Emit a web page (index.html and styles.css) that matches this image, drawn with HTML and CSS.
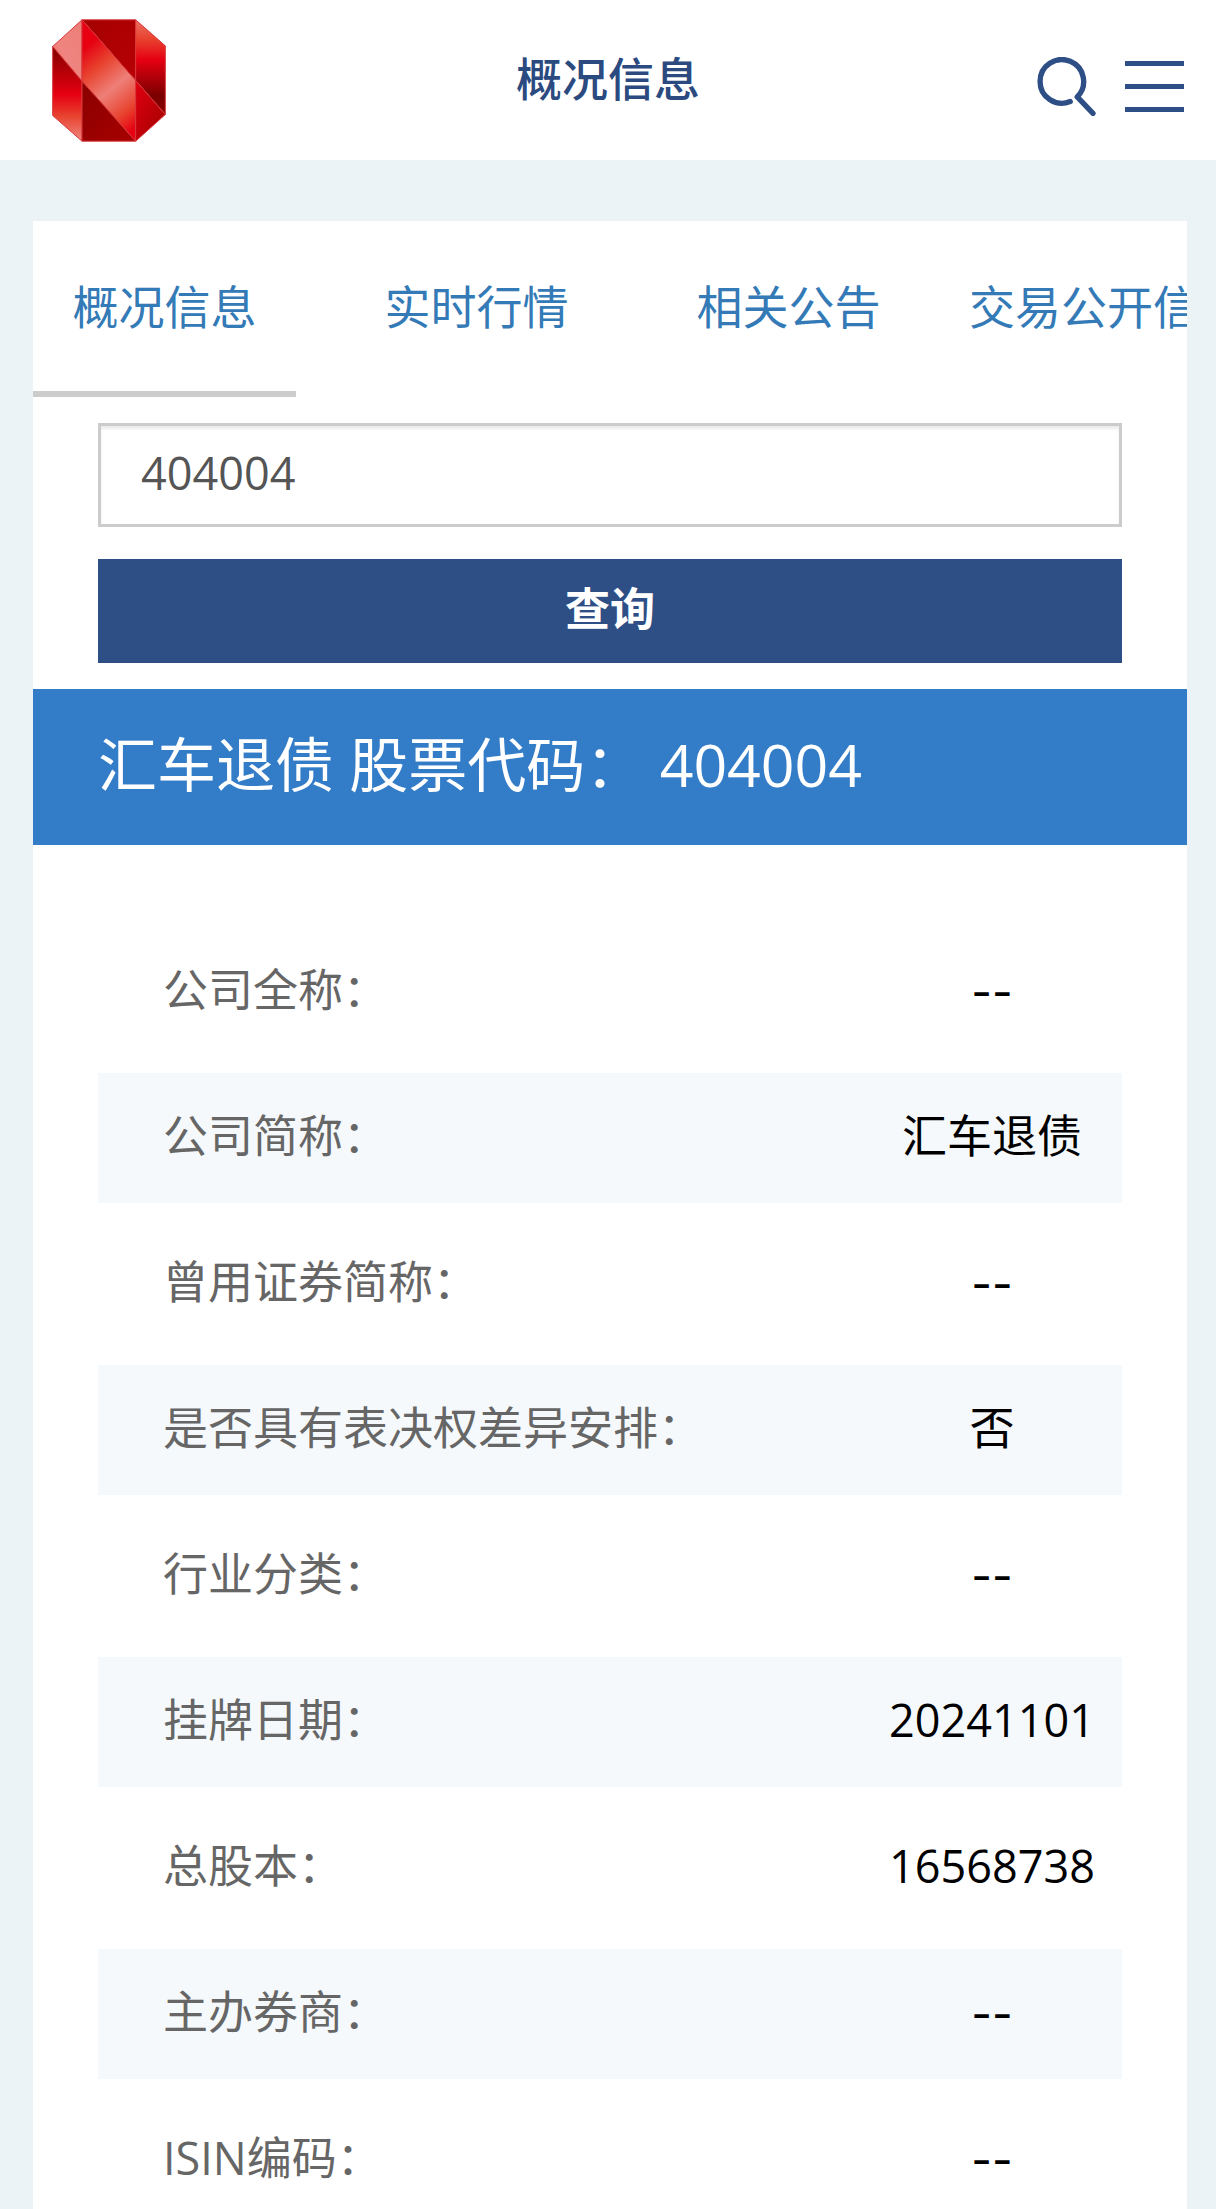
FILE: index.html
```html
<!DOCTYPE html>
<html lang="zh-CN">
<head>
  <meta charset="UTF-8" />
  <meta name="viewport" content="width=device-width, initial-scale=1.0"/>
  <title>概况信息</title>
  <link rel="stylesheet" href="styles.css">
</head>
<body>
  <header class="header">
    <a class="logo" href="#" aria-label="首页">
      <svg width="114" height="123" viewBox="66 54 342 368">
        <defs>
          <linearGradient id="leftTop" x1="0" y1="1" x2="1" y2="0">
            <stop offset="0" stop-color="#e8605a"/>
            <stop offset="0.4" stop-color="#ef8480"/>
            <stop offset="1" stop-color="#ee7f78"/>
          </linearGradient>
          <linearGradient id="leftSide" gradientUnits="userSpaceOnUse" x1="0" y1="150" x2="0" y2="410">
            <stop offset="0" stop-color="#8a0000"/>
            <stop offset="0.25" stop-color="#b80008"/>
            <stop offset="0.5" stop-color="#e60012"/>
            <stop offset="0.75" stop-color="#e8432f"/>
            <stop offset="1" stop-color="#ee7f78"/>
          </linearGradient>
          <linearGradient id="band" gradientUnits="userSpaceOnUse" x1="150" y1="150" x2="330" y2="370">
            <stop offset="0" stop-color="#e60012"/>
            <stop offset="0.25" stop-color="#e8432f"/>
            <stop offset="0.52" stop-color="#ee7f78"/>
            <stop offset="0.8" stop-color="#e8432f"/>
            <stop offset="1" stop-color="#e60012"/>
          </linearGradient>
          <linearGradient id="topDark" x1="0" y1="0" x2="1" y2="1">
            <stop offset="0" stop-color="#a40000"/>
            <stop offset="1" stop-color="#b80006"/>
          </linearGradient>
          <linearGradient id="bottomDark" x1="0" y1="0" x2="1" y2="1">
            <stop offset="0" stop-color="#8a0000"/>
            <stop offset="1" stop-color="#a80000"/>
          </linearGradient>
          <linearGradient id="rightSide" x1="0" y1="0" x2="0" y2="1">
            <stop offset="0" stop-color="#ee7064"/>
            <stop offset="0.2" stop-color="#e8432f"/>
            <stop offset="0.42" stop-color="#e60012"/>
            <stop offset="0.8" stop-color="#7a0000"/>
            <stop offset="1" stop-color="#8a0000"/>
          </linearGradient>
          <linearGradient id="rightBottom" x1="0" y1="0" x2="1" y2="1">
            <stop offset="0" stop-color="#e00010"/>
            <stop offset="1" stop-color="#a00000"/>
          </linearGradient>
        </defs>
        <g stroke="#d8383c" stroke-width="3" stroke-linejoin="round">
          <path fill="url(#leftTop)" d="M156 56L68 136L156 240Z"/>
          <path fill="url(#leftSide)" d="M68 136L156 240V420L68 343Z"/>
          <path fill="url(#topDark)" d="M156 56H317V238Z"/>
          <path fill="url(#band)" d="M156 56L317 238V420L156 240Z"/>
          <path fill="url(#bottomDark)" d="M156 240L317 420H156Z"/>
          <path fill="url(#rightSide)" d="M317 56L406 134V340L317 238Z"/>
          <path fill="url(#rightBottom)" d="M317 238L406 340L317 420Z"/>
        </g>
      </svg>
    </a>
    <h1 class="title">概况信息</h1>
    <div class="actions">
      <button type="button" class="icon-btn" aria-label="搜索">
        <svg width="59" height="59" viewBox="82 78 176 176" fill="none" stroke="#2e4e86" stroke-width="16" stroke-linecap="round" stroke-linejoin="round">
          <path d="M181 211A65 65 0 1 1 202 197L249 246"/>
        </svg>
      </button>
      <button type="button" class="icon-btn" aria-label="菜单">
        <svg width="59" height="51" viewBox="0 0 59 51" fill="#2e4e86">
          <rect width="59" height="5"/>
          <rect y="23" width="59" height="5"/>
          <rect y="46" width="59" height="5"/>
        </svg>
      </button>
    </div>
  </header>

  <main class="panel">
    <nav class="tabs">
      <a class="tab active" href="#">概况信息</a>
      <a class="tab" href="#">实时行情</a>
      <a class="tab" href="#">相关公告</a>
      <a class="tab" href="#">交易公开信息</a>
    </nav>

    <form class="search">
      <input type="text" class="search-input" value="404004" aria-label="股票代码">
      <button type="button" class="search-btn">查询</button>
    </form>

    <h2 class="banner">汇车退债 股票代码： 404004</h2>

    <!-- Company info -->
    <dl class="info">
      <div class="row"><dt>公司全称：</dt><dd class="empty">--</dd></div>
      <div class="row"><dt>公司简称：</dt><dd>汇车退债</dd></div>
      <div class="row"><dt>曾用证券简称：</dt><dd class="empty">--</dd></div>
      <div class="row"><dt>是否具有表决权差异安排：</dt><dd>否</dd></div>
      <div class="row"><dt>行业分类：</dt><dd class="empty">--</dd></div>
      <div class="row"><dt>挂牌日期：</dt><dd>20241101</dd></div>
      <div class="row"><dt>总股本：</dt><dd>16568738</dd></div>
      <div class="row"><dt>主办券商：</dt><dd class="empty">--</dd></div>
      <div class="row"><dt>ISIN编码：</dt><dd class="empty">--</dd></div>
    </dl>
  </main>
</body>
</html>
```
FILE: styles.css
```css
* {
  box-sizing: border-box;
}

body {
  margin: 0;
  background: #ebf3f6;
  color: #000;
  font-family: "Open Sans", "Noto Sans CJK SC", sans-serif;
  font-size: 45px;
}

.header {
  display: grid;
  grid-template-columns: 1fr auto 1fr;
  align-items: center;
  height: 160px;
  background: #fff;
}

.logo {
  padding-left: 52px;
}

.logo svg,
.icon-btn svg {
  display: block;
}

.title {
  margin: 0;
  padding-bottom: 4px;
  color: #2b4a80;
  font-size: 46px;
  font-weight: 500;
  line-height: 64px;
}

.actions {
  display: flex;
  justify-content: flex-end;
  align-items: center;
  gap: 29px;
  padding: 12px 32px 0 0;
}

.icon-btn {
  padding: 0;
  border: none;
  background: none;
  cursor: pointer;
}

.panel {
  margin: 61px 29px 0 33px;
  background: #fff;
}

/* the last tab runs off the edge, the bar scrolls sideways */
.tabs {
  display: flex;
  gap: 49px;
  overflow-x: auto;
  scrollbar-width: none;
}

.tab {
  flex: none;
  min-width: 263px;
  border-bottom: 6px solid transparent;
  color: #337ab7;
  font-size: 46px;
  line-height: 170px;
  text-align: center;
  text-decoration: none;
  white-space: nowrap;
}

.tab.active {
  border-bottom-color: #ccc;
}

.search {
  display: flex;
  flex-direction: column;
  gap: 32px;
  padding: 26px 65px;
}

.search-input {
  width: 100%;
  height: 104px;
  padding: 0 40px 6px;
  border: 3px solid #ccc;
  border-radius: 0;
  background: #fff;
  box-shadow: inset 0 3px 3px rgba(0, 0, 0, 0.08);
  color: #555;
  font: inherit;
}

.search-btn {
  height: 104px;
  padding: 0 0 10px;
  border: none;
  background: #2e4e86;
  color: #fff;
  font: inherit;
  font-weight: bold;
  cursor: pointer;
}

.banner {
  margin: 0;
  padding: 0 65px 6px;
  background: #337dc8;
  color: #fff;
  font-size: 59px;
  font-weight: normal;
  line-height: 150px;
}

.info {
  display: flex;
  flex-direction: column;
  gap: 16px;
  margin: 0;
  padding: 82px 65px 16px;
}

.row {
  display: flex;
  justify-content: space-between;
  padding-left: 65px;
  line-height: 126px;
}

.row:nth-child(even) {
  background: #f5f9fc;
}

.row dt {
  padding-bottom: 4px;
  color: #666;
}

.row dd {
  flex: none;
  width: 260px;
  margin: 0;
  text-align: center;
}

.row .empty {
  font-family: Inter, sans-serif;
  line-height: 130px;
}
```
